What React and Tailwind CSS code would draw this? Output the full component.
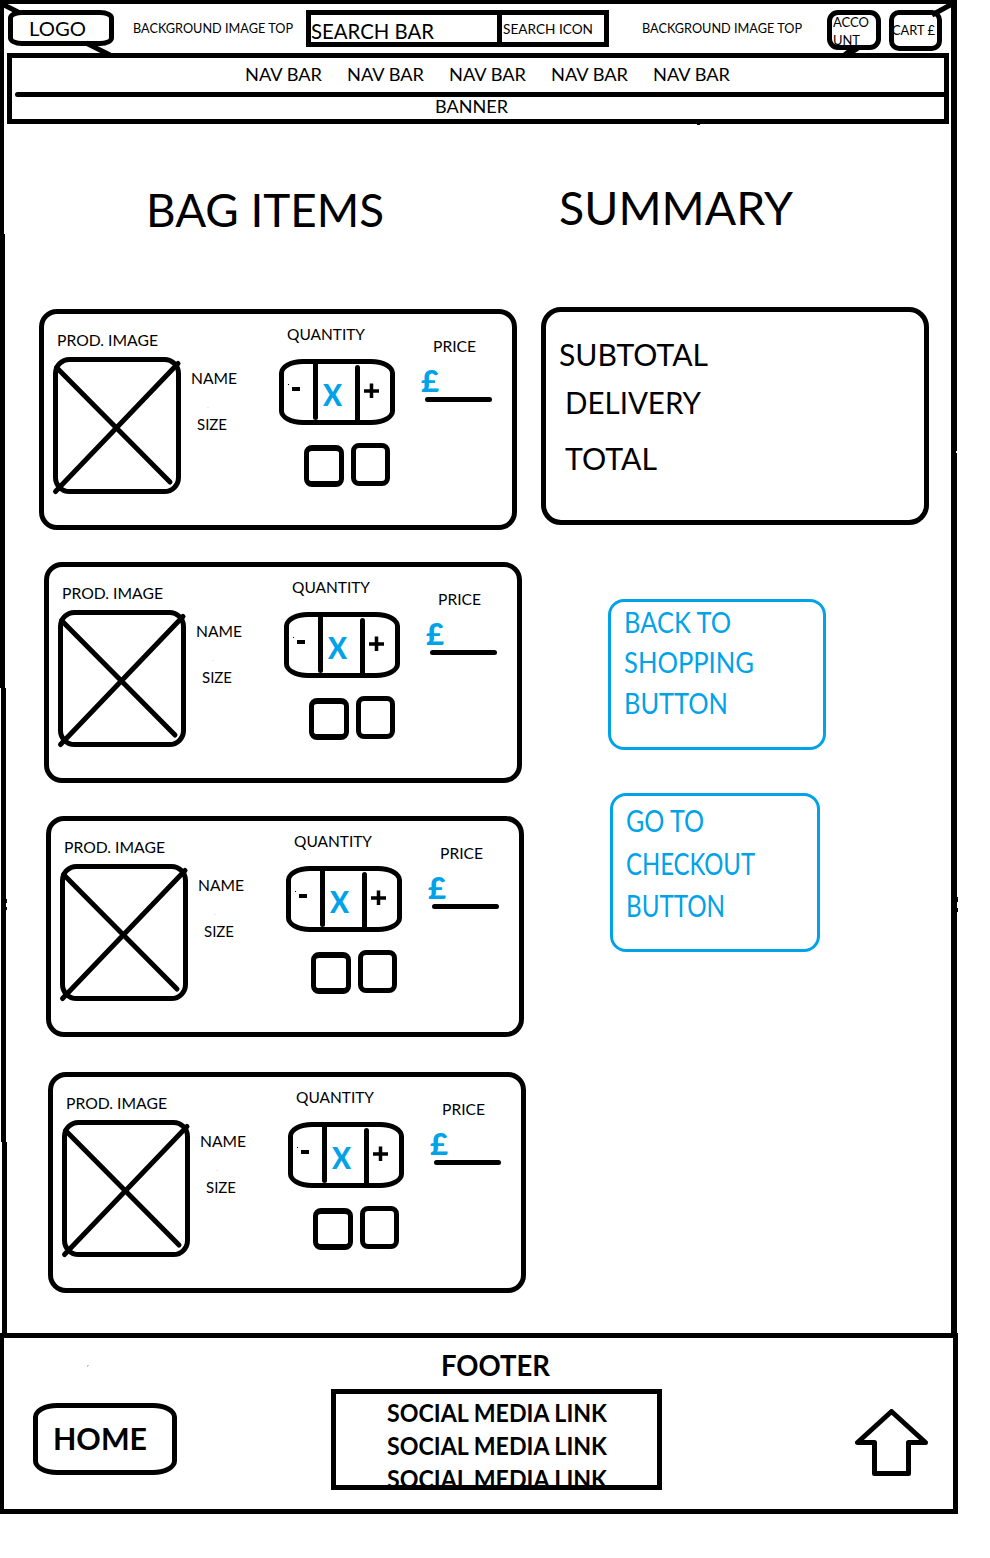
import { useLayoutEffect, useRef } from "react";

/* A line of text squeezed or stretched to fill the width of its box. */
function Fit({ children, className = "" }) {
  const ref = useRef(null);
  useLayoutEffect(() => {
    const el = ref.current;
    const scale = el.parentElement.clientWidth / el.getBoundingClientRect().width;
    el.style.transform = `scaleX(${scale})`;
  }, []);
  return (
    <div className={`flex shrink-0 items-center ${className}`}>
      <span ref={ref} className="inline-block origin-left whitespace-nowrap">
        {children}
      </span>
    </div>
  );
}

function Header() {
  return (
    <header className="flex h-[49px] items-start">
      <div className="mt-[6px] ml-[4px] flex h-[36px] w-[106px] rounded-[14px/8px] border-[5px] border-black bg-white pt-[3px] pl-[16px]">
        <Fit className="h-[20px] w-[57px] text-[20px]">LOGO</Fit>
      </div>
      <Fit className="mt-[14px] ml-[19px] h-[20px] w-[160px] text-[13px]">BACKGROUND IMAGE TOP</Fit>
      <div className="mt-[6px] ml-[13px] flex h-[37px] w-[303px] border-[5px] border-black">
        <Fit className="mt-[4px] h-[22px] w-[123px] text-[21px]">SEARCH BAR</Fit>
        <div className="ml-[63px] h-full w-[5px] bg-black" />
        <Fit className="mt-[4px] ml-px h-[20px] w-[90px] text-[14px]">SEARCH ICON</Fit>
      </div>
      <Fit className="mt-[14px] ml-[33px] h-[20px] w-[160px] text-[13px]">BACKGROUND IMAGE TOP</Fit>
      <div className="mt-[6px] ml-[25px] h-[40px] w-[54px] rounded-[11px] border-[5px] border-black bg-white pl-[1px]">
        <Fit className="-mt-[2px] h-[18px] w-[36px] text-[13px]">ACCO</Fit>
        <Fit className="h-[18px] w-[27px] text-[13px]">UNT</Fit>
      </div>
      <div className="mt-[6px] ml-[8px] h-[41px] w-[53px] rounded-[10px] border-[5px] border-black bg-white pt-[5px]">
        <Fit className="-ml-[2px] h-[20px] w-[43px] text-[13px]">CART £</Fit>
      </div>
    </header>
  );
}

const navItems = ["one", "two", "three", "four", "five"];

function NavBar() {
  return (
    <nav className="ml-[3px] h-[71px] w-[942px] border-[5px] border-black">
      <div className="flex h-[34px] gap-[25px] pl-[233px]">
        {navItems.map((id) => (
          <Fit key={id} className="mt-[6px] h-[20px] w-[77px] text-[18px]">NAV BAR</Fit>
        ))}
      </div>
      <div className="ml-[3px] h-[5px] rounded-l-full bg-black" />
      <Fit className="-mt-px ml-[423px] h-[20px] w-[73px] text-[18px]">BANNER</Fit>
    </nav>
  );
}

function BagItem({ className }) {
  return (
    <article className={`flex h-[221px] w-[478px] rounded-[18px] border-[5px] border-black ${className}`}>
      <div className="ml-[9px] w-[128px]">
        <Fit className="mt-[17px] ml-[4px] h-[20px] w-[101px] text-[15.5px]">PROD. IMAGE</Fit>
        <svg className="mt-[6px] block overflow-visible" width="128" height="137" viewBox="0 0 128 137" fill="none" stroke="black" strokeWidth="5" strokeLinecap="round">
          <rect x="2.5" y="2.5" width="123" height="132" rx="14" />
          <path d="M3.5 10.5L117 125M125 6.5L2.5 134.5" />
        </svg>
      </div>
      <div className="w-[54px]">
        <Fit className="mt-[55px] ml-[10px] h-[20px] w-[46px] text-[15.5px]">NAME</Fit>
        <div className="mt-[18px] ml-[26px] h-px w-[2px] bg-[#fbe6c8]" />
        <Fit className="mt-[7px] ml-[16px] h-[20px] w-[30px] text-[15.5px]">SIZE</Fit>
      </div>
      <div className="ml-[44px] w-[116px]">
        <Fit className="mt-[11px] ml-[8px] h-[20px] w-[78px] text-[15.5px]">QUANTITY</Fit>
        <div className="mt-[14px] flex h-[66px] w-[116px] rounded-[24px/14px] border-[5px] border-black">
          <div className="flex w-[29px]">
            <div className="mt-[20px] ml-[4px] h-px w-px bg-black" />
            <div className="mt-[23px] ml-[3px] h-[4px] w-[8px] bg-black" />
          </div>
          <div className="-mt-px h-[57px] w-[5px] rounded-b-full bg-black" />
          <div className="w-[37px]">
            <Fit className="mt-[19px] ml-[5px] h-[22px] w-[19px] text-[30px] font-black text-[#00a2e8]">X</Fit>
          </div>
          <div className="mt-px h-[57px] w-[5px] rounded-t-full bg-black" />
          <svg className="mt-[19px] ml-[4px]" width="15" height="15" viewBox="0 0 15 15" stroke="black" strokeWidth="3.5">
            <path d="M0 8H15M7.5 0.5V15" />
          </svg>
        </div>
        <div className="mt-[18px] ml-[25px] flex gap-[7px]">
          <div className="mt-[2px] h-[42px] w-[40px] rounded-[8px] border-x-[5px] border-y-[6px] border-black" />
          <div className="h-[43px] w-[39px] rounded-[8px] border-[5px] border-black" />
        </div>
      </div>
      <div className="ml-[26px] w-[72px]">
        <Fit className="mt-[23px] ml-[12px] h-[20px] w-[43px] text-[15.5px]">PRICE</Fit>
        <Fit className="mt-[12px] h-[22px] w-[18px] text-[30px] font-black text-[#00a2e8]">£</Fit>
        <div className="mt-[6px] ml-[4px] h-[5px] w-[67px] rounded-full bg-black" />
      </div>
    </article>
  );
}

function Summary() {
  return (
    <section className="ml-[20px] w-[388px]">
      <Fit className="mt-[66px] ml-[18px] h-[36px] w-[234px] text-[46px]">SUMMARY</Fit>
      <div className="mt-[81px] h-[218px] w-[388px] rounded-[20px] border-[5px] border-black">
        <Fit className="mt-[31px] ml-[13px] h-[22px] w-[149px] text-[30.5px]">SUBTOTAL</Fit>
        <Fit className="mt-[26px] ml-[19px] h-[22px] w-[136px] text-[30.5px]">DELIVERY</Fit>
        <Fit className="mt-[34px] ml-[19px] h-[22px] w-[92px] text-[30.5px]">TOTAL</Fit>
      </div>
      <button className="mt-[74px] ml-[67px] block h-[151px] w-[218px] rounded-[16px] border-[3px] border-[#00a2e8] text-left text-[29.5px] text-[#00a2e8]">
        <Fit className="-mt-[25px] ml-[13px] h-[40px] w-[107px]">BACK TO</Fit>
        <Fit className="ml-[13px] h-[41px] w-[130px]">SHOPPING</Fit>
        <Fit className="ml-[13px] h-[40px] w-[104px]">BUTTON</Fit>
      </button>
      <button className="mt-[43px] ml-[69px] block h-[159px] w-[210px] rounded-[16px] border-[3px] border-[#00a2e8] text-left text-[30.5px] text-[#00a2e8]">
        <Fit className="-mt-[19px] ml-[13px] h-[42px] w-[78px]">GO TO</Fit>
        <Fit className="ml-[13px] h-[43px] w-[129px]">CHECKOUT</Fit>
        <Fit className="ml-[13px] h-[42px] w-[99px]">BUTTON</Fit>
      </button>
    </section>
  );
}

function Footer() {
  return (
    <footer className="flex h-[181px] w-[958px] border-[5px] border-l-4 border-black font-bold">
      <div className="w-[327px]">
        <div className="mt-[27px] ml-[83px] h-[2px] w-[2px] border-t border-l border-[#c4c4c4]" />
        <div className="mt-[36px] ml-[29px] h-[72px] w-[144px] rounded-[24px/14px] border-[5px] border-black pt-[20px] pl-[15px]">
          <Fit className="-mt-[1px] h-[22px] w-[94px] text-[30.5px]">HOME</Fit>
        </div>
      </div>
      <div className="w-[331px]">
        <Fit className="mt-[16px] ml-[110px] h-[22px] w-[109px] text-[28px]">FOOTER</Fit>
        <div className="mt-[13px] h-[101px] w-[331px] overflow-hidden border-[5px] border-black pt-[2px] pl-[51px] text-[24px]">
          <Fit className="h-[33px] w-[220px]">SOCIAL MEDIA LINK</Fit>
          <Fit className="h-[33px] w-[220px]">SOCIAL MEDIA LINK</Fit>
          <Fit className="h-[33px] w-[220px]">SOCIAL MEDIA LINK</Fit>
        </div>
      </div>
      <svg className="mt-[71px] ml-[193px]" width="73" height="67" viewBox="0 0 73 67" fill="none" stroke="black" strokeWidth="5" strokeLinejoin="round">
        <path d="M36.5 2.5L2.5 33.5H19.5V64.5H53.5V33.5H70.5Z" />
      </svg>
    </footer>
  );
}

export default function App() {
  return (
    <div className="relative h-[1558px] w-[990px] overflow-hidden bg-white font-['Lato',sans-serif] leading-none text-black">
      <div className="h-[1333px] w-[957px] border-t-4 border-r-[6px] border-black pl-[4px]">
        <Header />
        <NavBar />
        <main className="flex">
          <section className="ml-[35px] w-[482px]">
            <Fit className="mt-[68px] ml-[107px] h-[36px] w-[238px] text-[46px]">BAG ITEMS</Fit>
            <BagItem className="mt-[81px]" />
            <BagItem className="mt-[32px] ml-[5px]" />
            <BagItem className="mt-[33px] ml-[7px]" />
            <BagItem className="mt-[35px] ml-[9px]" />
          </section>
          <Summary />
        </main>
      </div>
      <Footer />
      {/* Hand-drawn left edge and the diagonal strokes that tie the header boxes to the frame. */}
      <svg className="pointer-events-none absolute top-0 left-0" width="990" height="1340" viewBox="0 0 990 1340" fill="none">
        <path fill="black" d="M0 0H4V234H5V688H6V899H7V903H6V907H7V910H6V1142H7V1334H2V1142H1V688H0Z" />
        <path fill="black" d="M957 897H958V902H957ZM957 908H958V912H957ZM697 123H700V125H697Z" />
        <path fill="white" d="M956 451H957V453H956Z" />
        <path stroke="black" strokeWidth="5" d="M2 4L20 13M86 43L110 55M952 4L932 15" />
        <path fill="black" d="M848 49H861L855 53H843Z" />
      </svg>
    </div>
  );
}
